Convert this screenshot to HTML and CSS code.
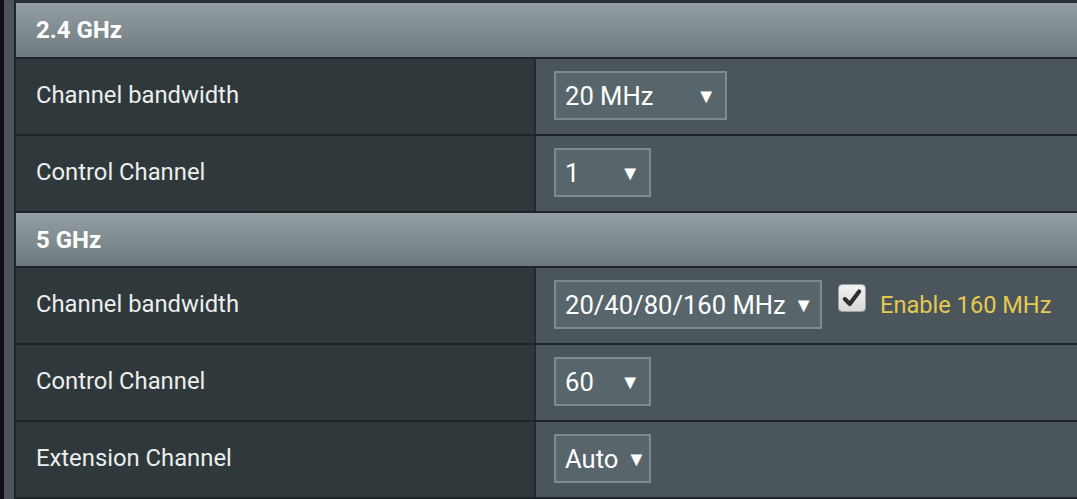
FILE: index.html
```html
<!DOCTYPE html>
<html>
<head>
<meta charset="utf-8">
<link rel="stylesheet" href="styles.css">
</head>
<body>
<div class="page">
  <div class="rail-dark"></div>
  <div class="rail"></div>
  <div class="panel">
    <div class="head">2.4 GHz</div>
    <div class="row">
      <div class="label">Channel bandwidth</div>
      <div class="value"><div class="select w172"><span>20 MHz</span><span class="arrow">▼</span></div></div>
    </div>
    <div class="row">
      <div class="label">Control Channel</div>
      <div class="value"><div class="select w97"><span>1</span><span class="arrow">▼</span></div></div>
    </div>
    <div class="head head5">5 GHz</div>
    <div class="row">
      <div class="label">Channel bandwidth</div>
      <div class="value">
        <div class="select w268"><span>20/40/80/160 MHz</span><span class="arrow">▼</span></div>
        <div class="check"><svg viewBox="0 0 20 20" width="22" height="22"><path d="M3.5 11 L8 15.5 L16.5 4" fill="none" stroke="#2b2f31" stroke-width="3.8" stroke-linecap="round" stroke-linejoin="round"/></svg></div>
        <span class="note">Enable 160 MHz</span>
      </div>
    </div>
    <div class="row">
      <div class="label">Control Channel</div>
      <div class="value"><div class="select w97"><span>60</span><span class="arrow">▼</span></div></div>
    </div>
    <div class="row">
      <div class="label">Extension Channel</div>
      <div class="value"><div class="select w97"><span>Auto</span><span class="arrow">▼</span></div></div>
    </div>
  </div>
</div>
</body>
</html>
```
FILE: styles.css
```css
html, body {
  margin: 0;
  padding: 0;
  background: #111314;
  font-family: Roboto, "Noto Sans", sans-serif;
}
.page {
  display: flex;
  width: 1077px;
  height: 499px;
  overflow: hidden;
}
.rail-dark {
  width: 4px;
  background: #0e1011;
}
.rail {
  width: 10px;
  background: #4a5459;
}
.panel {
  flex: 1;
  display: flex;
  flex-direction: column;
  background: #1e2528;
  border-left: 2px solid #1e2528;
  border-top: 3px solid #2a3235;
  gap: 2px;
}
.head {
  height: 54px;
  display: flex;
  align-items: center;
  padding-left: 20px;
  color: #ffffff;
  font-weight: bold;
  font-size: 24px;
  background: linear-gradient(#949fa2, #6d797e);
}
.head5 {
  height: 53px;
}
.row {
  height: 75px;
  display: flex;
}
.label {
  flex: none;
  box-sizing: border-box;
  width: 520px;
  background: #2f383b;
  color: #eceeee;
  font-size: 23.8px;
  display: flex;
  align-items: center;
  padding-left: 20px;
  padding-bottom: 3px;
  border-right: 2px solid #232a2d;
  white-space: nowrap;
}
.value {
  flex: 1;
  background: #4a565b;
  display: flex;
  align-items: center;
  padding-left: 18px;
  padding-bottom: 2px;
  white-space: nowrap;
}
.select {
  box-sizing: border-box;
  height: 49px;
  border: 2px solid #7d8a8f;
  background: #58666c;
  color: #ffffff;
  font-size: 25.6px;
  display: flex;
  align-items: center;
  justify-content: space-between;
  padding: 0 9px 0 9px;
  white-space: nowrap;
}
.arrow {
  font-size: 20px;
  color: #ffffff;
  margin-left: 8px;
}
.w172 { width: 173px; }
.w97 { width: 97px; }
.w268 { width: 268px; }
.check {
  box-sizing: border-box;
  flex: none;
  width: 28px;
  height: 28px;
  margin-left: 16px;
  margin-top: -13px;
  border-radius: 4px;
  background: linear-gradient(#f2f2f2, #d8d8d8);
  border: 1px solid #9aa3a6;
  display: flex;
  align-items: center;
  justify-content: center;
}
.note {
  margin-left: 14px;
  color: #e6c950;
  font-size: 23.6px;
}
```
